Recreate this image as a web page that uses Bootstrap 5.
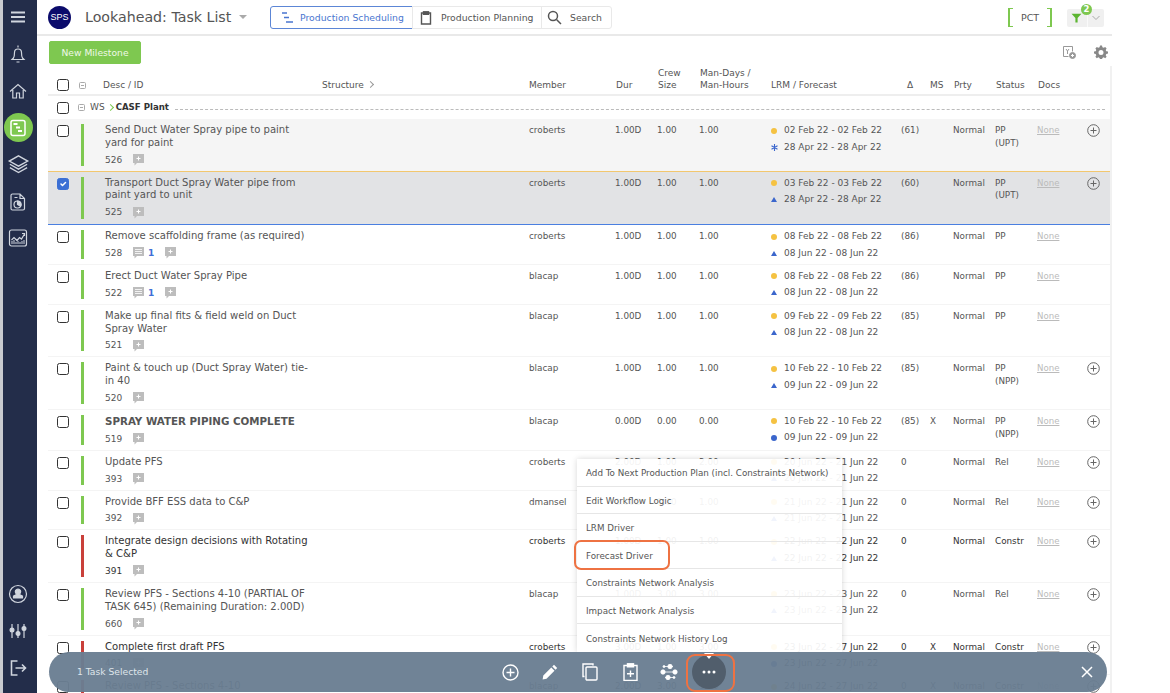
<!DOCTYPE html>
<html lang="en">
<head>
<meta charset="UTF-8">
<title>Lookahead: Task List</title>
<link href="https://cdn.jsdelivr.net/npm/bootstrap@5.3.0/dist/css/bootstrap.min.css" rel="stylesheet">
<style>
    html, body { height: 100%; overflow: hidden; }
    body { font-family: "DejaVu Sans", sans-serif; font-size: 8.8px; color: #555; background: #fff; position: relative; }

    /* side rail */
    .rail { width: 37px; flex: none; background: #232d4a; border-left: 3px solid #c9cbd0; height: 693px; }
    .rail-item { height: 36.8px; display: flex; align-items: center; justify-content: center; margin-left: -3px; width: 36px; flex: none; }
    .rail-item:first-child { height: 36px; }
    .rail-item:first-child svg { margin-top: -2px; }
    .rail-item svg { width: 20px; height: 20px; fill: none; stroke: #d0d5de; stroke-width: 1.2; }
    .rail-on { width: 29px; height: 29px; border-radius: 50%; background: #7ec850; display: flex; align-items: center; justify-content: center; }
    .rail-gap { flex: 1; }

    /* top bar */
    .page { width: 1075px; flex: none; }
    .topbar { height: 36px; border-bottom: 2px solid #e9e9e9; padding: 1px 8px 0 11px; }
    .logo-disc { width: 23px; height: 23px; border-radius: 50%; background: #0b0b6b; color: #fff; font-family: "Liberation Sans", sans-serif; font-size: 9px; line-height: 23px; text-align: center; flex: none; }
    .page-title { font-size: 14.200px; color: #555; margin: 0 0 0 14px; font-weight: 400; width: 185px; white-space: nowrap; }
    .page-title i { display: inline-block; border: 4px solid transparent; border-top: 4px solid #aaa; border-bottom: 0; margin-left: 8px; vertical-align: 3px; }
    .tabs .btn { font-size: 9.300px; height: 23px; padding: 0 0 0 7px; color: #555; border: 1px solid #e9e9e9; background: #fff; display: flex; align-items: center; gap: 9px; --bs-btn-border-radius: 3px; white-space: nowrap; }
    .tabs .btn.on { color: #4a76d0; border-color: #5c86d6; width: 143px; padding-left: 10px; gap: 6px; }
    .tabs .btn.t2 { width: 130px; }
    .tabs .btn.t3 { width: 71px; padding-left: 5px; gap: 8px; }
    .tabs svg { flex: none; }
    .pct { width: 44px; height: 19px; border-left: 2px solid #7ec850; border-right: 2px solid #7ec850; position: relative; text-align: center; line-height: 19px; font-size: 9.500px; color: #555; }
    .pct::before, .pct::after { content: ""; position: absolute; top: 0; bottom: 0; width: 3px; border-top: 1px solid #7ec850; border-bottom: 1px solid #7ec850; }
    .pct::before { left: 0; } .pct::after { right: 0; }
    .filter-box { width: 37px; height: 18px; background: #f0f0f0; border-radius: 2px; margin-left: 15px; position: relative; }
    .filter-box::after { content: ""; position: absolute; left: 20px; top: 0; bottom: 0; width: 1px; background: #fafafa; }
    .filter-num { position: absolute; left: 14px; top: -5px; width: 11px; height: 11px; border-radius: 50%; background: #7ec850; color: #fff; font-size: 8.500px; font-weight: 700; line-height: 11px; text-align: center; z-index: 1; }

    /* tool row */
    .toolrow { height: 30px; padding: 5px 4px 0 12px; }
    .btn-new { background: #7ec850; border-color: #7ec850; color: #eef8e6; font-size: 9.200px; height: 23px; width: 92px; padding: 0; border-radius: 2px; }

    /* grid */
    .gridbox { width: 1064px; margin-left: 11px; border-right: 2px solid #f1f1f1; }
    .hdr { height: 30px; border-bottom: 2px solid #eee; align-items: flex-end; padding-bottom: 3px; line-height: 11.500px; font-size: 9px; }
    .hdr > div > span { padding-left: 1px; display: block; }
    .grp { height: 23px; align-items: center; font-size: 9px; }
    .task { border-bottom: 1px solid #f4f4f4; line-height: 12.800px; }
    .task.hi1 { background: #f5f5f5; border-bottom-color: #f2c76e; }
    .task.hi2 { background: #e2e3e5; border-bottom-color: #4a7fe0; }
    .task.hi2 .k-desc { padding-bottom: 5px; }
    .task.crit { color: #333; }
    .k-chk { width: 33px; flex: none; padding-left: 9px; }
    .k-bar { width: 2.500px; flex: none; margin: 5px 0; background: #7ec850; }
    .k-bar.red { background: #c9403a; }
    .k-desc { width: 238.500px; flex: none; padding: 5px 0 4px 21.500px; }
    .k-name { max-width: 207px; font-size: 10.050px; }
    .k-name strong { font-size: 10.300px; white-space: nowrap; }
    .k-meta { margin-top: 4px; display: flex; align-items: center; height: 13px; font-size: 9px; }
    .k-meta b { color: #3f6fd6; font-weight: 700; margin: 0 11px 0 3px; }
    .k-meta .num { width: 28px; }
    .k-str { width: 207px; flex: none; }
    .k-mem { width: 86px; flex: none; }
    .k-dur, .k-crew, .k-prty, .k-stat { width: 42px; flex: none; }
    .k-man { width: 72px; flex: none; }
    .k-lrm { width: 130px; flex: none; }
    .k-dlt { width: 29px; flex: none; }
    .k-ms { width: 23px; flex: none; }
    .k-doc { width: 50px; flex: none; }
    .k-add { width: 23px; flex: none; }
    .task > div:not(.k-bar):not(.k-desc) { padding-top: 5px; }
    .none-link { color: #bbb; text-decoration: underline; font-size: 8.600px; }
    .dt { height: 16.500px; line-height: 13px; display: flex; align-items: flex-start; white-space: nowrap; font-size: 9px; }
    .dt i { width: 13px; flex: none; height: 13px; display: flex; align-items: center; }
    .mk-dot { width: 6px; height: 6px; border-radius: 50%; background: #f5c242; display: block; }
    .mk-dot.blue { background: #3b66cc; }
    .mk-tri { width: 0; height: 0; border: 3px solid transparent; border-top: 0; border-bottom: 5px solid #3b66cc; display: block; }
    .form-check-input.tick { width: 12px; height: 12px; margin: 0; border: 1.500px solid #333; border-radius: 2.500px; display: block; background-color: #fff; }
    .form-check-input.tick:checked { background-color: #3b6fd4; border-color: #3b6fd4; }
    .task .tick { margin-top: 1px; }
    .mini-minus { width: 7px; height: 7px; border: 1px solid #aaa; border-radius: 1.500px; position: relative; flex: none; }
    .mini-minus::after { content: ""; position: absolute; left: 1px; right: 1px; top: 2px; height: 1px; background: #aaa; }
    .dash-line { flex: 1; border-top: 1px dashed #bbb; margin: 3px 5px 0 6px; }
    .plant { font-weight: 700; color: #333; font-size: 8.600px; }
    .chev { width: 5px; height: 5px; border-top: 1.500px solid #7ec850; border-right: 1.500px solid #7ec850; transform: rotate(45deg); margin: 0 3px 0 0; }
    .chev.grey { border-width: 1px 1px 0 0; border-color: #999; display: inline-block; margin: 0 0 1px 1px; }

    /* selection bar and its menu lie over the grid */
    .selbar { position: absolute; left: 49px; top: 652px; width: 1058px; height: 40px; border-radius: 20px; background: rgba(106, 126, 146, .96); color: #dfe5ea; font-size: 9.200px; display: flex; align-items: center; padding-left: 28px; }
    .selbar-btn { position: absolute; top: 0; height: 40px; width: 34px; display: flex; align-items: center; justify-content: center; }
    .more-disc { width: 34px; height: 34px; border-radius: 50%; background: #515e6c; display: flex; align-items: center; justify-content: center; position: relative; }
    .more-disc::before { content: ""; position: absolute; left: 12px; top: -2px; border: 5px solid transparent; border-top: 6px solid #fff; border-bottom: 0; }
    .actmenu { position: absolute; left: 577px; top: 459px; width: 265px; height: 193px; overflow: hidden; background: rgba(255, 255, 255, .93); box-shadow: 0 0 6px rgba(0, 0, 0, .16); }
    .actmenu .list-group-item { background: transparent; font-size: 8.750px; color: #555; height: 27.500px; padding: 3px 0 0 9px; display: flex; align-items: center; border-color: #e6e6e6; white-space: nowrap; }
    .callout { position: absolute; border: 2px solid #ee7242; border-radius: 7px; }
    .callout.c1 { left: 574px; top: 540px; width: 96px; height: 30px; }
    .callout.c2 { left: 686px; top: 654px; width: 49px; height: 38px; border-radius: 9px; }
</style>
</head>
<body>
<div class="d-flex">
    <nav class="rail d-flex flex-column">
        <div class="rail-item"><svg viewBox="0 0 20 20"><path d="M3 5.500h14M3 10h14M3 14.500h14" stroke-width="1.800"/></svg></div>
        <div class="rail-item"><svg viewBox="0 0 20 20"><path d="M10 1.500v2M5.500 14c1-1.500 1-3 1-5.500a3.500 3.500 0 0 1 7 0c0 2.500 0 4 1 5.500l1.500 1.500H4zM8.500 18h3"/></svg></div>
        <div class="rail-item"><svg viewBox="0 0 20 20"><path d="M2 10.500 10 3.500l8 7M4.800 9v8h3.700v-5h3v5h3.700V9"/></svg></div>
        <div class="rail-item"><div class="rail-on"><svg viewBox="0 0 20 20" style="stroke:#fff;stroke-width:1.500"><rect x="3" y="2.500" width="14" height="15" rx="2"/><path d="M5.500 6h4M8 9.500h4M10 13h4" stroke-width="1.800"/></svg></div></div>
        <div class="rail-item"><svg viewBox="0 0 20 20" style="width:23px;height:23px"><path d="M10 2.500 18 7l-8 4.500L2 7zM2.500 9.800l7.500 4.200 7.500-4.200M2.500 12.800l7.500 4.200 7.500-4.200"/></svg></div>
        <div class="rail-item"><svg viewBox="0 0 20 20"><path d="M4.500 2h7.500l4.500 4.500V16.500a1.500 1.500 0 0 1-1.500 1.500H4.500A1.500 1.500 0 0 1 3 16.500v-13A1.500 1.500 0 0 1 4.500 2zM12 2v4.500h4.500M6.500 5.500h3"/><circle cx="9.500" cy="12.500" r="3.500"/><path d="M9.500 9a3.500 3.500 0 0 1 3 5.300L9.500 12.500z" fill="#d0d5de"/></svg></div>
        <div class="rail-item"><svg viewBox="0 0 20 20"><rect x="1.500" y="2" width="17" height="16" rx="2"/><path d="M3.500 12l2.500-2.500 3 3 2.500-3 2 1.500 3-5M14 5.500h2.500V8"/><path d="M4 16v-3M6 16v-4M8 16v-2M10 16v-3M12 16v-2M14 16v-3M16 16v-4" stroke-width="1"/></svg></div>
        <div class="rail-gap"></div>
        <div class="rail-item"><svg viewBox="0 0 20 20"><circle cx="10" cy="10" r="8.500"/><path d="M10 5a2.700 2.700 0 0 1 2 4.500c-.5.700-.3 1.300.4 1.600l2.100 1v1.900h-9v-1.900l2.100-1c.7-.3.900-.9.400-1.600A2.700 2.700 0 0 1 10 5z" fill="#d0d5de"/></svg></div>
        <div class="rail-item"><svg viewBox="0 0 20 20"><path d="M4 3v14M10 3v14M16 3v14"/><circle cx="4" cy="9" r="1.900" fill="#d0d5de"/><circle cx="10" cy="12.500" r="1.900" fill="#d0d5de"/><circle cx="16" cy="7.500" r="1.900" fill="#d0d5de"/></svg></div>
        <div class="rail-item" style="margin-bottom:7px"><svg viewBox="0 0 20 20"><path d="M9.500 3H3.500v14h6M7.500 10H17.500M14 6.500l3.500 3.500-3.500 3.500" stroke-width="1.600"/></svg></div>
    </nav>

    <main class="page">
        <header class="topbar d-flex align-items-center">
            <div class="logo-disc">SPS</div>
            <h1 class="page-title">Lookahead: Task List<i></i></h1>
            <div class="btn-group tabs">
                <button class="btn on"><svg width="13" height="13" viewBox="0 0 13 13" fill="none" stroke="#4a76d0" stroke-width="1.400"><path d="M1 2h5M3 6.500h5M5 11h7"/></svg>Production Scheduling</button>
                <button class="btn t2"><svg width="12" height="14" viewBox="0 0 12 14" fill="none" stroke="#555" stroke-width="1.400"><path d="M3.500 2H1.500v11h9V2H8.500"/><rect x="3.500" y=".8" width="5" height="2.500" fill="#555"/></svg>Production Planning</button>
                <button class="btn t3"><svg width="15" height="15" viewBox="0 0 15 15" fill="none" stroke="#555" stroke-width="1.500"><circle cx="6" cy="6" r="4.500"/><path d="M9.500 9.500 14 14"/></svg>Search</button>
            </div>
            <div class="ms-auto pct">PCT</div>
            <div class="filter-box d-flex align-items-center">
                <svg class="ms-1" width="11" height="11" viewBox="0 0 10 10"><path d="M.5 1.500h9L6 5.500V9.500H4V5.500z" fill="#5cb531"/></svg>
                <span class="filter-num">2</span>
                <svg class="ms-auto" style="margin-right:4px" width="8" height="6" viewBox="0 0 8 6" fill="none" stroke="#aaa"><path d="M.5 1 4 4.500 7.500 1"/></svg>
            </div>
        </header>

        <div class="toolrow d-flex align-items-start">
            <button class="btn btn-new">New Milestone</button>
            <svg class="ms-auto" width="14" height="14" viewBox="0 0 14 14" fill="none" stroke="#999" style="margin-top:4px"><path d="M1.500 1.500h9v5M1.500 1.500v10h5M4 4l1.500 2L7 4M5.500 6v3"/><circle cx="10.500" cy="10.500" r="3" fill="#999"/><path d="M9 10.500h3M10.500 9v3" stroke="#fff"/></svg>
            <svg style="margin:4px 0 0 18px" width="14" height="14" viewBox="0 0 14 14"><path d="M6 .5h2l.4 1.700 1.300.6L11.200 2 12.600 3.400l-.9 1.500.6 1.300 1.700.4v2l-1.700.4-.6 1.300.9 1.500-1.400 1.400-1.500-.9-1.300.6-.4 1.600H6l-.4-1.600-1.300-.6-1.500.9L1.400 11.800l.9-1.500-.6-1.300L0 8.600v-2l1.700-.4.6-1.300L1.400 3.400 2.800 2l1.500.8 1.300-.6zM7 5a2.500 2.500 0 1 0 0 5 2.500 2.500 0 0 0 0-5z" fill="#888" fill-rule="evenodd"/></svg>
        </div>

        <div class="gridbox">
            <div class="hdr d-flex">
                <div class="k-chk"><input class="form-check-input tick" type="checkbox"></div>
                <div style="width:22px;flex:none;margin-bottom:2px"><div class="mini-minus" style="margin-left:-2px"></div></div>
                <div style="width:219px;flex:none"><span class="ps-0">Desc / ID</span></div>
                <div class="k-str"><span class="ps-0">Structure <i class="chev grey"></i></span></div>
                <div class="k-mem"><span class="ps-0">Member</span></div>
                <div class="k-dur"><span>Dur</span></div>
                <div class="k-crew"><span>Crew<br>Size</span></div>
                <div class="k-man"><span>Man-Days /<br>Man-Hours</span></div>
                <div class="k-lrm"><span class="ps-0">LRM / Forecast</span></div>
                <div class="k-dlt"><span style="padding-left:6px">Δ</span></div>
                <div class="k-ms"><span class="ps-0">MS</span></div>
                <div class="k-prty"><span>Prty</span></div>
                <div class="k-stat"><span>Status</span></div>
                <div class="k-doc"><span>Docs</span></div>
                <div class="k-add"></div>
            </div>
            <div class="grp d-flex">
                <div class="k-chk"><input class="form-check-input tick" type="checkbox"></div>
                <div class="mini-minus" style="margin-left:-3px"></div>
                <span style="margin:0 3px 0 5px">WS</span><i class="chev"></i>
                <span class="plant">CASF Plant</span>
                <div class="dash-line"></div>
            </div>
            <div id="linhas"></div>
        </div>
    </main>
</div>

<div class="actmenu">
    <div class="list-group list-group-flush">
        <div class="list-group-item">Add To Next Production Plan (incl. Constraints Network)</div>
        <div class="list-group-item">Edit Workflow Logic</div>
        <div class="list-group-item">LRM Driver</div>
        <div class="list-group-item">Forecast Driver</div>
        <div class="list-group-item">Constraints Network Analysis</div>
        <div class="list-group-item">Impact Network Analysis</div>
        <div class="list-group-item">Constraints Network History Log</div>
    </div>
</div>

<div class="selbar">
    <span>1 Task Selected</span>
    <div class="selbar-btn" style="left:444px"><svg width="17" height="17" viewBox="0 0 17 17" fill="none" stroke="#fff" stroke-width="1.400"><circle cx="8.500" cy="8.500" r="7.500"/><path d="M8.500 4.500v8M4.500 8.500h8"/></svg></div>
    <div class="selbar-btn" style="left:484px"><svg width="16" height="16" viewBox="0 0 16 16" fill="#fff"><path d="M12 .8 15.200 4 13.500 5.700 10.300 2.500zM9.300 3.500l3.200 3.200L4.500 14.700 .6 15.400 1.300 11.500z"/></svg></div>
    <div class="selbar-btn" style="left:524px"><svg width="16" height="18" viewBox="0 0 16 18" fill="none" stroke="#fff" stroke-width="1.400"><path d="M2.500 13.500H1V1h10v1.500"/><rect x="4" y="4" width="11" height="13" rx="1"/></svg></div>
    <div class="selbar-btn" style="left:564px"><svg width="15" height="18" viewBox="0 0 15 18" fill="none" stroke="#fff" stroke-width="1.400"><path d="M4 2.500H1v15h13v-15h-3M7.500 7.500v6.500M4 10.800h7"/><rect x="4.500" y=".8" width="6" height="3" fill="#fff"/></svg></div>
    <div class="selbar-btn" style="left:603px"><svg width="18" height="16" viewBox="0 0 18 16" fill="#fff" stroke="#fff" stroke-width=".8"><path d="M4 2.500h9M2.500 8h13M5 13.500h9" fill="none"/><circle cx="4" cy="2.500" r="1"/><circle cx="10" cy="2.500" r="2.200"/><circle cx="3" cy="8" r="2.200"/><circle cx="15" cy="8" r="2.200"/><circle cx="8" cy="13.500" r="2.200"/><circle cx="14" cy="13.500" r="1"/></svg></div>
    <div class="selbar-btn" style="left:643px"><div class="more-disc"><svg width="14" height="4" viewBox="0 0 14 4" fill="#fff"><circle cx="2" cy="2" r="1.500"/><circle cx="7" cy="2" r="1.500"/><circle cx="12" cy="2" r="1.500"/></svg></div></div>
    <div class="selbar-btn" style="left:1021px"><svg width="12" height="12" viewBox="0 0 12 12" stroke="#fff" stroke-width="1.500"><path d="M1 1l10 10M11 1 1 11"/></svg></div>
</div>

<div class="callout c1"></div>
<div class="callout c2"></div>

<script>
    const marca = {
        dot: '<span class="mk-dot"></span>',
        blue: '<span class="mk-dot blue"></span>',
        tri: '<span class="mk-tri"></span>',
        star: '<svg width="7" height="7" viewBox="0 0 7 7" stroke="#3b66cc" stroke-width="1.100"><path d="M3.500 0v7M.5 1.700l6 3.600M6.500 1.700l-6 3.600"/></svg>'
    };
    const nota = '<svg width="12" height="12" viewBox="0 0 12 12"><path d="M0 0h11v9H4L1.500 11.500V9H0z" fill="#bdbdbd"/><path d="M5.500 2.500v4M3.500 4.500h4" stroke="#fff"/></svg>';
    const chat = '<svg width="12" height="12" viewBox="0 0 12 12"><path d="M0 0h11v9H4L1.500 11.500V9H0z" fill="#bdbdbd"/><path d="M2 2.500h7M2 4.500h7M2 6.500h7" stroke="#fff" stroke-width=".8"/></svg>';
    const mais = '<svg width="13" height="13" viewBox="0 0 13 13" fill="none" stroke="#666"><circle cx="6.500" cy="6.500" r="5.800"/><path d="M6.500 3.500v6M3.500 6.500h6"/></svg>';

    const tarefas = [
        { t: 'Send Duct Water Spray pipe to paint yard for paint', id: 526, m: 'croberts', d: '1.00D', c: '1.00', h: '1.00', a: '02 Feb 22 - 02 Feb 22', b: '28 Apr 22 - 28 Apr 22', k: 'star', dl: '(61)', st: 'PP<br>(UPT)', add: 1, cl: 'hi1' },
        { t: 'Transport Duct Spray Water pipe from paint yard to unit', id: 525, m: 'croberts', d: '1.00D', c: '1.00', h: '1.00', a: '03 Feb 22 - 03 Feb 22', b: '28 Apr 22 - 28 Apr 22', k: 'tri', dl: '(60)', st: 'PP<br>(UPT)', add: 1, cl: 'hi2', sel: 1 },
        { t: 'Remove scaffolding frame (as required)', id: 528, m: 'croberts', d: '1.00D', c: '1.00', h: '1.00', a: '08 Feb 22 - 08 Feb 22', b: '08 Jun 22 - 08 Jun 22', k: 'tri', dl: '(86)', st: 'PP', msg: 1 },
        { t: 'Erect Duct Water Spray Pipe', id: 522, m: 'blacap', d: '1.00D', c: '1.00', h: '1.00', a: '08 Feb 22 - 08 Feb 22', b: '08 Jun 22 - 08 Jun 22', k: 'tri', dl: '(86)', st: 'PP', msg: 1 },
        { t: 'Make up final fits &amp; field weld on Duct Spray Water', id: 521, m: 'blacap', d: '1.00D', c: '1.00', h: '1.00', a: '09 Feb 22 - 09 Feb 22', b: '08 Jun 22 - 08 Jun 22', k: 'tri', dl: '(85)', st: 'PP' },
        { t: 'Paint &amp; touch up (Duct Spray Water) tie-in 40', id: 520, m: 'blacap', d: '1.00D', c: '1.00', h: '1.00', a: '10 Feb 22 - 10 Feb 22', b: '09 Jun 22 - 09 Jun 22', k: 'tri', dl: '(85)', st: 'PP<br>(NPP)', add: 1 },
        { t: '<strong>SPRAY WATER PIPING COMPLETE</strong>', id: 519, m: 'blacap', d: '0.00D', c: '0.00', h: '0.00', a: '10 Feb 22 - 10 Feb 22', b: '09 Jun 22 - 09 Jun 22', k: 'blue', dl: '(85)', ms: 'X', st: 'PP<br>(NPP)', add: 1 },
        { t: 'Update PFS', id: 393, m: 'croberts', d: '2.00D', c: '1.00', h: '2.00', a: '20 Jun 22 - 21 Jun 22', b: '20 Jun 22 - 21 Jun 22', k: 'tri', dl: '0', st: 'Rel', add: 1 },
        { t: 'Provide BFF ESS data to C&amp;P', id: 392, m: 'dmansel', d: '1.00D', c: '1.00', h: '1.00', a: '21 Jun 22 - 21 Jun 22', b: '21 Jun 22 - 21 Jun 22', k: 'tri', dl: '0', st: 'Rel', add: 1 },
        { t: 'Integrate design decisions with Rotating &amp; C&amp;P', id: 391, m: 'croberts', d: '1.00D', c: '1.00', h: '1.00', a: '22 Jun 22 - 22 Jun 22', b: '22 Jun 22 - 22 Jun 22', k: 'tri', dl: '0', st: 'Constr', add: 1, red: 1 },
        { t: 'Review PFS - Sections 4-10 (PARTIAL OF TASK 645) (Remaining Duration: 2.00D)', id: 660, m: 'blacap', d: '1.00D', c: '3.00', h: '3.00', a: '23 Jun 22 - 23 Jun 22', b: '23 Jun 22 - 23 Jun 22', k: 'tri', dl: '0', st: 'Rel', add: 1 },
        { t: 'Complete first draft PFS', id: 401, m: 'croberts', d: '3.00D', c: '1.00', h: '3.00', a: '23 Jun 22 - 27 Jun 22', b: '23 Jun 22 - 27 Jun 22', k: 'blue', dl: '0', ms: 'X', st: 'Constr', add: 1, red: 1 },
        { t: 'Review PFS - Sections 4-10', id: 402, m: 'blacap', d: '2.00D', c: '3.00', h: '1.00', a: '24 Jun 22 - 27 Jun 22', b: '24 Jun 22 - 27 Jun 22', k: 'tri', dl: '0', ms: 'X', st: 'Constr', add: 1, red: 1 }
    ];

    document.getElementById('linhas').innerHTML = tarefas.map(p => `
        <div class="task d-flex ${p.cl || ''} ${p.red ? 'crit' : ''}">
            <div class="k-chk"><input class="form-check-input tick" type="checkbox" ${p.sel ? 'checked' : ''}></div>
            <div class="k-bar ${p.red ? 'red' : ''}"></div>
            <div class="k-desc">
                <div class="k-name">${p.t}</div>
                <div class="k-meta"><span class="num">${p.id}</span>${p.msg ? chat + '<b>1</b>' : ''}${nota}</div>
            </div>
            <div class="k-str"></div>
            <div class="k-mem">${p.m}</div>
            <div class="k-dur">${p.d}</div>
            <div class="k-crew">${p.c}</div>
            <div class="k-man">${p.h}</div>
            <div class="k-lrm">
                <div class="dt"><i>${marca.dot}</i>${p.a}</div>
                <div class="dt"><i>${marca[p.k]}</i>${p.b}</div>
            </div>
            <div class="k-dlt">${p.dl}</div>
            <div class="k-ms">${p.ms || ''}</div>
            <div class="k-prty">Normal</div>
            <div class="k-stat">${p.st}</div>
            <div class="k-doc"><span class="none-link">None</span></div>
            <div class="k-add">${p.add ? mais : ''}</div>
        </div>`).join('');
</script>
<script src="https://cdn.jsdelivr.net/npm/bootstrap@5.3.0/dist/js/bootstrap.bundle.min.js"></script>
</body>
</html>
